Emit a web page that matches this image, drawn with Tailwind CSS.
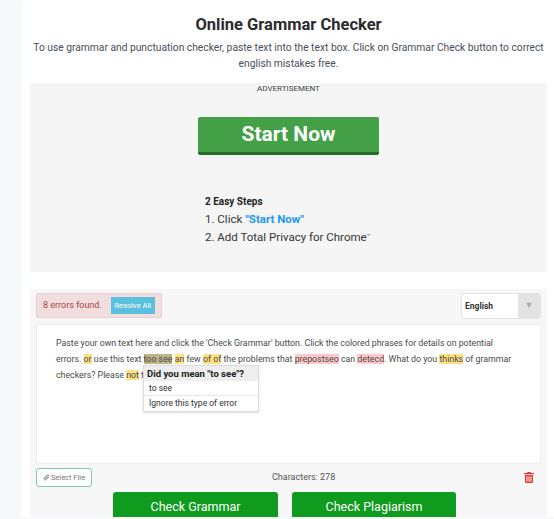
<!DOCTYPE html>
<html lang="en">
<head>
    <meta charset="UTF-8">
    <title>Online Grammar Checker</title>
    <script src="https://cdn.jsdelivr.net/npm/@tailwindcss/browser@4"></script>
</head>
<body class="bg-[#f5f9fa] h-[519px] overflow-hidden font-['Roboto',sans-serif] text-[#495057]">
    <div class="ml-[21px] h-[517px] bg-white rounded-tl-md overflow-hidden">
        <div class="pl-[9px] pr-[7px]">
            <h1 class="pt-[14px] text-center text-[16.5px] leading-[22px] font-bold text-[#2b2b2b]">Online Grammar Checker</h1>
            <p class="mt-[4px] text-center text-[10.25px] leading-[16px] whitespace-nowrap">To use grammar and punctuation checker, paste text into the text box. Click on Grammar Check button to correct<br>english mistakes free.</p>

            <div class="mt-[11px] h-[189px] bg-[#f5f5f5] flex flex-col items-center">
                <div class="text-[8px] leading-[11px] text-[#444]">ADVERTISEMENT</div>
                <div class="mt-[23px] w-[181px] h-[38px] bg-[#43a047] border-b-[3px] border-[#256b29] rounded-[2px] flex items-center justify-center text-white text-[21px] font-bold">Start Now</div>
                <div class="mt-[38px] w-[181px] pl-[7px] text-[11.5px] leading-[18px] text-[#333]">
                    <div class="h-[17px] text-[10px] font-bold text-[#222]">2 Easy Steps</div>
                    <div>1. Click <b class="text-[#2196f3]">"Start Now"</b></div>
                    <div>2. Add Total Privacy for Chrome<sup class="text-[6px]">™</sup></div>
                </div>
            </div>

            <div class="mt-[17px] bg-[#f7f7f7] px-[6px] pt-[4px] h-[240px]">
                <div class="flex justify-between items-start">
                    <div class="h-[25px] w-[126px] bg-[#f2dede] border border-[#ebccd1] rounded-[2px] flex items-center pl-[6px] text-[9px] text-[#a94442]">
                        8 errors found.
                        <span class="ml-[9px] w-[44px] h-[17px] bg-[#5bc0de] text-white text-[7.5px] flex items-center justify-center">Resolve All</span>
                    </div>
                    <div class="h-[26px] w-[80px] bg-white border border-[#e3e3e3] rounded-[3px] flex overflow-hidden">
                        <span class="flex-1 pl-[3px] text-[8.5px] leading-[24px] font-bold text-[#333]">English</span>
                        <span class="w-[22px] bg-[#e3e3e3] flex items-center justify-center text-[9px] text-[#aaa]">▼</span>
                    </div>
                </div>

                <div class="relative mt-[5px] h-[140px] bg-white border border-[#eee] pl-[19px] pr-[10px] pt-[10px] text-[8.8px] leading-[16px] text-[#4a4a4a]">
                    <p class="whitespace-nowrap">Paste your own text here and click the 'Check Grammar' button. Click the colored phrases for details on potential</p>
                    <p class="whitespace-nowrap">errors. <span class="bg-[#ffe082]">or</span> use this text <span class="bg-[#bdb388]">too see</span> <span class="bg-[#ffe082]">an</span> few <span class="bg-[#ffe082]">of of</span> the problems that <span class="bg-[#ffc9c9]">prepostseo</span> can <span class="bg-[#ffc9c9]">detecd</span>. What do you <span class="bg-[#ffe082]">thinks</span> of grammar</p>
                    <p class="whitespace-nowrap">checkers? Please <span class="bg-[#ffe082]">not</span> t</p>
                    <div class="absolute left-[106px] top-[40px] w-[116px] bg-white border border-[#ddd] text-[8.5px] text-[#333] shadow-sm">
                        <div class="h-[15px] bg-[#eee] px-[3px] leading-[15px] font-bold text-[9.5px] text-[#222]">Did you mean "to see"?</div>
                        <div class="h-[15px] px-[5px] leading-[15px] border-b border-[#e6e6e6]">to see</div>
                        <div class="h-[15px] px-[5px] leading-[15px]">Ignore this type of error</div>
                    </div>
                </div>

                <div class="relative mt-[4px] h-[19px] flex items-center justify-between text-[9px]">
                    <span class="h-[19px] w-[56px] bg-white border border-[#7fc8a9] rounded-[3px] flex items-center justify-center text-[7.5px] text-[#777] gap-[1px]">
                        <svg class="w-[7px] h-[7px]" viewBox="0 0 16 16" fill="none" stroke="#888" stroke-width="2"><path d="M13.5 7 7.500 13a3 3 0 0 1-4.500-4.500l6.500-6.500a2 2 0 0 1 3 3L6.500 11a1 1 0 0 1-1.500-1.500L11 4"/></svg>
                        Select File
                    </span>
                    <span class="absolute left-[236px] text-[#555]">Characters: 278</span>
                    <svg class="mr-[7px] w-[10px] h-[11px]" viewBox="0 0 10 11" fill="#e53935"><path d="M3.500 0h3l.5 1h3v1.200H0V1h3zM1 3h8v7a1 1 0 0 1-1 1H2a1 1 0 0 1-1-1zm1.500 1.200v5.600h1V4.200zm2 0v5.600h1V4.200zm2 0v5.600h1V4.200z"/></svg>
                </div>

                <div class="mt-[5px] flex gap-[14px] pl-[77px]">
                    <div class="w-[165px] h-[40px] bg-[#0f9b1d] rounded-[3px] pt-[5px] text-center text-white text-[12.5px] leading-[20px]">Check Grammar</div>
                    <div class="w-[164px] h-[40px] bg-[#0f9b1d] rounded-[3px] pt-[5px] text-center text-white text-[12.5px] leading-[20px]">Check Plagiarism</div>
                </div>
            </div>
        </div>
    </div>
</body>
</html>
